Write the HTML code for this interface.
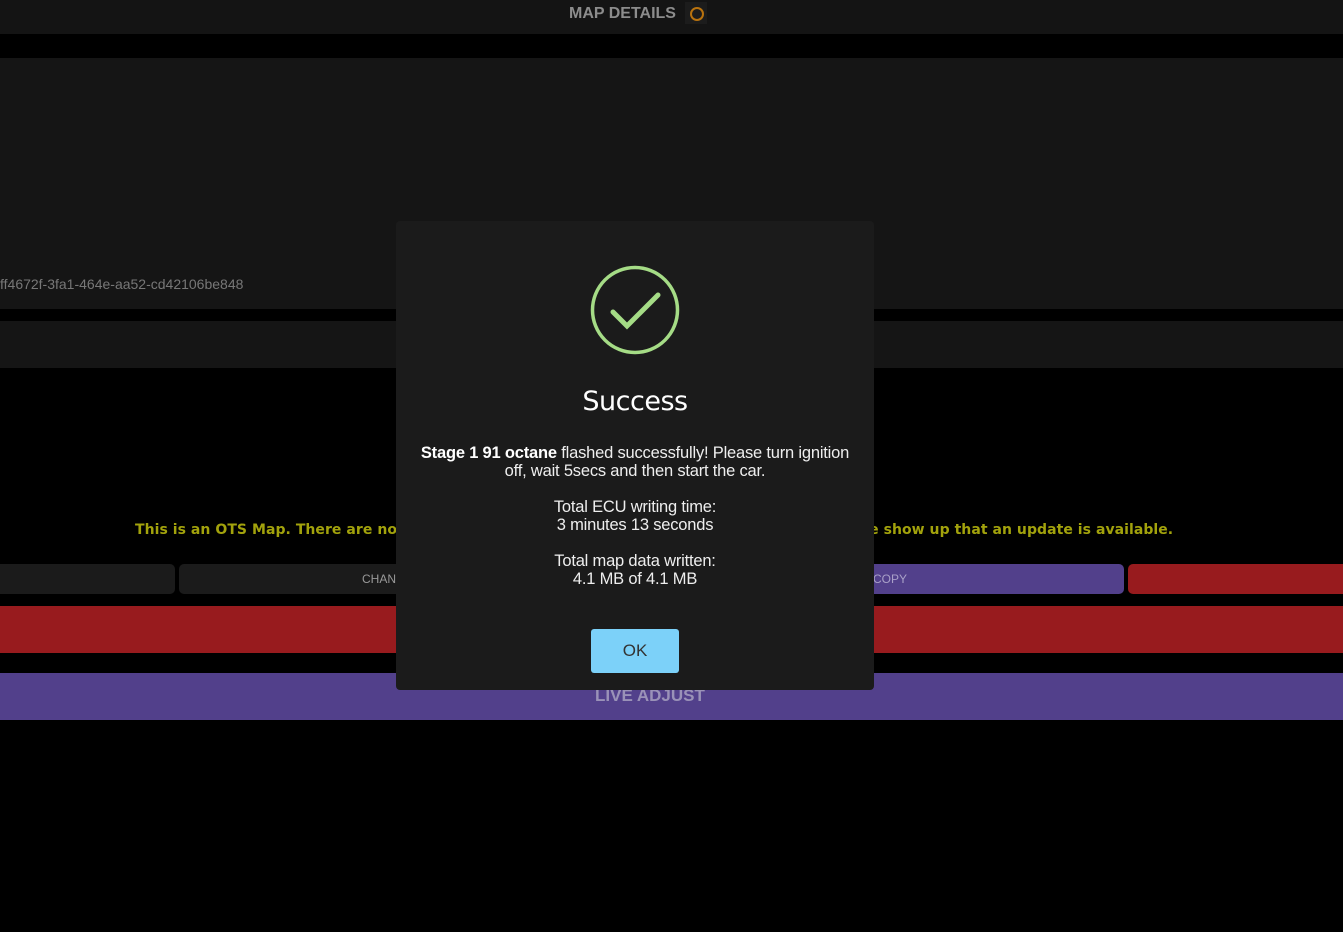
<!DOCTYPE html>
<html><head><style>
body{margin:0;width:1343px;height:932px;background:#000;position:relative;overflow:hidden;font-family:"Liberation Sans",sans-serif}
.a{position:absolute}
</style></head><body>
<div class="a" style="left:0;top:0;width:1343px;height:34px;background:#141414"></div>
<div class="a" style="left:569px;top:5px;font:bold 16px 'Liberation Sans',sans-serif;color:#8c8c8c">MAP DETAILS</div>
<div class="a" style="left:685px;top:2px;width:22px;height:22px;background:#1c1c1c"></div>
<div class="a" style="left:690px;top:7px;width:10px;height:10px;border:2px solid #b8720e;border-radius:50%"></div>
<div class="a" style="left:0;top:58px;width:1343px;height:251px;background:#151515"></div>
<div class="a" style="left:0;top:276px;font-size:14px;color:#777">ff4672f-3fa1-464e-aa52-cd42106be848</div>
<div class="a" style="left:0;top:321px;width:1343px;height:47px;background:#151515"></div>
<div class="a" style="left:135px;top:522px;font:bold 14px 'DejaVu Sans',sans-serif;color:#a2a20c;letter-spacing:0.05px;white-space:nowrap">This is an OTS Map. There are no updates available for OTS Maps. You will not see a message show up that an update is available.</div>
<div class="a" style="left:0;top:564px;width:175px;height:30px;background:#1b1b1b;border-radius:0 5px 5px 0"></div>
<div class="a" style="left:179px;top:564px;width:440px;height:30px;background:#1b1b1b;border-radius:5px;color:#999;font-size:12px;line-height:30px;padding-left:183px;box-sizing:border-box">CHANGE</div>
<div class="a" style="left:640px;top:564px;width:484px;height:30px;background:#52408b;border-radius:5px;color:#a9a0c8;font-size:12px;line-height:30px;padding-left:233px;box-sizing:border-box">COPY</div>
<div class="a" style="left:1128px;top:564px;width:215px;height:30px;background:#981b1e;border-radius:5px 0 0 5px"></div>
<div class="a" style="left:0;top:606px;width:1343px;height:47px;background:#981b1e"></div>
<div class="a" style="left:0;top:673px;width:1343px;height:47px;background:#52408b"></div>
<div class="a" style="left:595px;top:686px;font:bold 17px 'Liberation Sans',sans-serif;color:#9a92b8">LIVE ADJUST</div>
<div class="a" style="left:396px;top:221px;width:478px;height:469px;background:#1b1b1b;border-radius:4px"></div>
<svg class="a" style="left:590px;top:265px" width="90" height="90"><circle cx="45" cy="45" r="42.5" fill="none" stroke="#a5dc86" stroke-width="3.5"/><path d="M23 47 L37 61 L68 30" fill="none" stroke="#a5dc86" stroke-width="5" stroke-linecap="round"/></svg>
<div class="a" style="left:396px;width:478px;top:386px;text-align:center;font:500 27px 'DejaVu Sans',sans-serif;color:#fff;letter-spacing:-0.5px">Success</div>
<div class="a" style="left:396px;width:478px;top:444px;text-align:center;font-size:16.5px;line-height:18px;color:#eee;letter-spacing:-0.2px"><b style="color:#fff">Stage 1 91 octane</b> flashed successfully! Please turn ignition<br>off, wait 5secs and then start the car.<br><br>Total ECU writing time:<br>3 minutes 13 seconds<br><br>Total map data written:<br>4.1 MB of 4.1 MB</div>
<div class="a" style="left:591px;top:629px;width:88px;height:44px;background:#7cd1f9;border-radius:3px;text-align:center;line-height:44px;font-size:17px;color:#333">OK</div>
</body></html>
